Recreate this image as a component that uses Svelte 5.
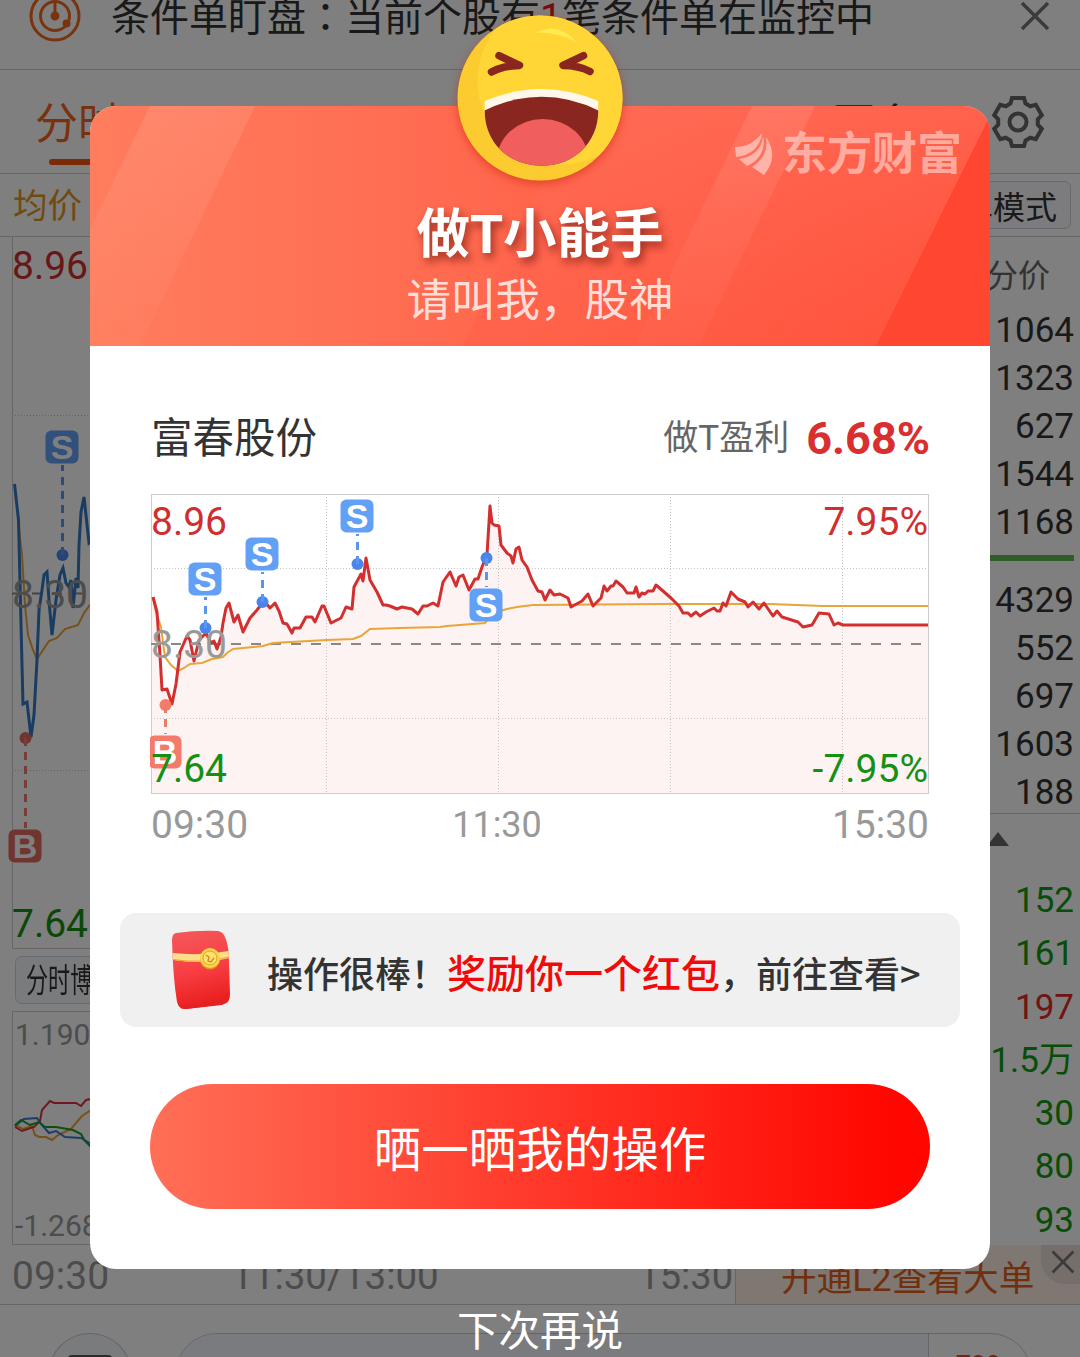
<script>
    const tabs = ['分时', '五日', '日K', '周K', '月K', '更多'];
    const asks = ['1064', '1323', '627', '1544', '1168'];
    const bids = ['4329', '552', '697', '1603', '188'];
    const trades = [
        { value: '152', down: true },
        { value: '161', down: true },
        { value: '197', down: false },
        { value: '1.5万', down: true },
        { value: '30', down: true },
        { value: '80', down: true },
        { value: '93', down: true }
    ];

    const price = '2,103 6,118 9,161 11,196 16,195 21,210 25,190 29,158 36,142 39,146 43,167 48,146 55,139 60,149 63,147 66,155 70,143 72,129 75,114 78,109 83,128 87,121 92,138 99,124 106,116 113,107 119,114 124,109 128,117 132,129 136,130 141,139 143,134 149,134 155,123 161,123 164,128 171,112 173,112 180,129 190,124 195,113 201,115 203,93 210,80 212,87 215,64 219,86 226,98 232,111 235,111 239,112 246,115 251,113 261,115 267,120 272,112 276,112 282,109 287,112 292,88 299,78 305,92 308,83 312,81 318,96 324,85 327,85 331,73 336,61 339,12 341,29 343,31 348,32 350,51 356,59 360,62 362,69 365,55 368,53 371,66 376,73 381,86 387,97 391,98 394,106 399,96 403,101 409,100 417,104 420,113 431,107 437,100 442,112 450,104 453,92 456,97 460,92 462,92 465,87 472,93 476,99 483,99 485,93 488,103 491,99 494,100 497,97 502,97 505,91 512,97 520,104 528,112 532,119 537,119 540,122 545,118 549,122 555,118 563,114 566,117 569,117 572,109 575,112 580,98 587,105 594,108 597,113 602,108 608,115 613,109 622,122 626,117 631,123 647,128 652,133 661,131 668,119 678,120 683,131 687,129 692,131 777,131';
    const average = '2,103 5,118 10,133 14,163 20,171 27,177 33,174 39,170 51,169 61,165 72,163 76,159 82,155 112,152 122,149 176,146 202,145 210,142 219,135 249,134 289,133 296,132 334,129 339,123 346,118 356,115 366,113 382,111 509,110 619,110 672,112 777,112';

    const points = [
        { label: 'S', x: 54, y: 85, dot: 134 },
        { label: 'S', x: 111, y: 60, dot: 108 },
        { label: 'S', x: 206, y: 22, dot: 70 },
        { label: 'S', x: 335, y: 111, dot: 64 },
        { label: 'B', x: 14, y: 258, dot: 211 }
    ];
    const backPoints = [
        { label: 'S', x: 62, y: 210, dot: 318 },
        { label: 'B', x: 25, y: 609, dot: 501 }
    ];

    // six teeth, each one the same outline turned by 60 degrees
    const tooth = [[-7.5, -18.5], [-6, -24], [6, -24], [7.5, -18.5]];
    const gear = [0, 60, 120, 180, 240, 300]
        .flatMap((deg) => {
            const a = (deg * Math.PI) / 180;
            return tooth.map(([x, y]) => `${x * Math.cos(a) - y * Math.sin(a)},${x * Math.sin(a) + y * Math.cos(a)}`);
        })
        .join(' ');
</script>

{#snippet marker(p)}
    <g class={p.label === 'S' ? 'sell' : 'buy'}>
        <circle cx={p.x + 0.5} cy={p.dot} r="6" />
        <line x1={p.x + 0.5} x2={p.x + 0.5} y1={p.dot} y2={p.y > p.dot ? p.y - 18 : p.y + 18} />
        <rect x={p.x - 16.5} y={p.y - 16.5} width="33" height="33" rx="6" />
        <text x={p.x} y={p.y + 12}>{p.label}</text>
    </g>
{/snippet}

<div class="screen">
    <div class="page">
        <div class="notice">
            <svg class="radar" width="52" height="52" viewBox="-26 -26 52 52">
                <circle r="24" />
                <circle r="14.5" />
                <line x1="0" y1="-24" x2="0" y2="0" />
                <circle class="solid" r="3" />
                <circle class="solid" cx="11.5" cy="7.5" r="2.5" />
            </svg>
            <p>条件单盯盘<i>：</i>当前个股有<b>1</b>笔条件单在监控中</p>
            <svg class="cross" width="30" height="30" viewBox="0 0 30 30"><path d="M2 2L28 28M28 2L2 28" /></svg>
        </div>

        <div class="tabs">
            {#each tabs as tab, i}
                <span class:active={i === 0}>{tab}</span>
            {/each}
            <svg class="gear" width="54" height="54" viewBox="-27 -27 54 54">
                <polygon points={gear} />
                <circle r="8.5" />
            </svg>
        </div>

        <div class="tools">
            <span class="avg">均价</span>
            <span class="mode">简单模式</span>
        </div>

        <div class="main">
            <div class="left">
                <svg class="back-chart" width="735" height="712" viewBox="0 0 735 712">
                    <path class="frame" d="M12.5 0V711.5H735" />
                    <path class="grid" d="M15 178.5H735M15 533.5H735" />
                    <path class="zero" d="M12 356.5H735" />
                    <polyline class="avg-line" points="18,283 22,318 25,368 28,398 33,413 37,422 43,413 49,404 57,401 65,392 78,388 84,376 90,368 100,366" />
                    <polyline class="back-line" points="14.5,247 18.5,283 22,428 23,467 27,465 31,500 34,478 37,423 39,373 42,353 44,338 47,335 49,363 52,398 56,363 60,338 63,331 66,346 69,350 71,343 73,371 76,341 78,351 79,308 81,275 84,260 89,306 93,303" />
                    {#each backPoints as p}
                        {@render marker(p)}
                    {/each}
                    <text class="num up" x="12" y="42">8.96</text>
                    <text class="num mid" x="12" y="371">8.30</text>
                    <text class="num down" x="12" y="700">7.64</text>
                </svg>
                <span class="chip"><span>分时博弈</span></span>
                <div class="flow">
                    <span>1.190</span>
                    <svg width="720" height="60" viewBox="0 0 720 60">
                        <polyline stroke="#f0a030" points="1,34 9,38 18,35 21,44 25,46 32,46 38,49 44,44 57,38 62,32 68,25 77,19 90,12" />
                        <polyline stroke="#e03040" points="1,36 8,40 20,36 26,30 28,19 36,10 40,12 62,12 67,15 72,9 77,8 90,10" />
                        <polyline stroke="#3a78d8" points="1,35 10,28 23,27 27,33 35,42 42,40 51,46 67,47 77,53 90,58" />
                        <polyline stroke="#18a028" points="1,34 7,29 16,34 25,31 31,36 42,36 59,39 67,43 71,50 77,56 90,58" />
                    </svg>
                    <span>-1.268</span>
                </div>
                <div class="times">
                    <span>09:30</span><span>11:30/13:00</span><span>15:30</span>
                </div>
            </div>
            <div class="right">
                <div class="price-tab">分价</div>
                {#each asks as n}<div class="row">{n}</div>{/each}
                <div class="bar"></div>
                {#each bids as n}<div class="row">{n}</div>{/each}
                <div class="sort"><svg width="22" height="14" viewBox="0 0 22 14"><path d="M11 0L22 14H0Z" /></svg></div>
                {#each trades as t}
                    <div class="row trade" class:fall={t.down}>{t.value}</div>
                {/each}
                <div class="promo">
                    <span>开通L2查看大单</span>
                    <div class="promo-close">
                        <svg class="cross" width="24" height="24" viewBox="0 0 30 30"><path d="M2 2L28 28M28 2L2 28" /></svg>
                    </div>
                </div>
            </div>
        </div>

        <div class="footer">
            <div class="round"><i></i></div>
            <div class="pill"><div class="input"></div><b>788</b></div>
        </div>
    </div>

    <div class="mask">
        <div class="dialog">
            <div class="head">
                <svg class="head-bg" width="900" height="240" viewBox="0 0 900 240">
                    <defs>
                        <linearGradient id="base"><stop offset="0" stop-color="#ff7d5e" /><stop offset=".5" stop-color="#ff664c" /><stop offset="1" stop-color="#ff4832" /></linearGradient>
                        <linearGradient id="panel" x2="0" y2="1"><stop offset="0" stop-color="#ff705c" stop-opacity=".65" /><stop offset="1" stop-color="#ff5c46" stop-opacity=".4" /></linearGradient>
                        <linearGradient id="fade" x2="0" y2="1"><stop offset="0" stop-color="#fff" stop-opacity=".1" /><stop offset="1" stop-color="#fff" stop-opacity=".02" /></linearGradient>
                    </defs>
                    <rect width="900" height="240" fill="url(#base)" />
                    <path d="M60 0H165L50 240H0V124Z" fill="url(#fade)" />
                    <path d="M488 0H900V10L786 240H372Z" fill="url(#panel)" />
                    <path d="M662 0H725L608 240H545Z" fill="url(#fade)" />
                    <path d="M900 10V240H786Z" fill="#ff4630" />
                </svg>
                <div class="brand">
                    <svg width="40" height="42" viewBox="0 0 40 42">
                        <path d="M26 0C19 9 11 13 0 13L1 23C14 22 25 14 27 0Z" />
                        <path d="M28 2C27 15 18 23 4 25L12 32C24 27 31 16 28 2Z" />
                        <path d="M31 3C33 17 28 26 17 33L29 41C39 29 40 16 31 3Z" />
                    </svg>
                    <span>东方财富</span>
                </div>
                <h1>做T小能手</h1>
                <h2>请叫我，股神</h2>
                <svg class="emoji" width="166" height="166" viewBox="0 0 166 166">
                    <defs>
                        <clipPath id="face"><circle cx="83" cy="83" r="82.5" /></clipPath>
                        <clipPath id="mouth"><path d="M27.7 86Q84.5 62 141.3 86V96C141 128 117 150.7 84.5 150.7C52 150.7 27.7 128 27.7 96Z" /></clipPath>
                    </defs>
                    <circle cx="83" cy="83" r="82.5" fill="#fccb30" />
                    <circle cx="104" cy="66" r="83.5" fill="#ffd636" clip-path="url(#face)" />
                    <path d="M79 17.5Q102 7 119 26.7Q100 17 79 17.5Z" fill="#ffec50" />
                    <g class="eyes">
                        <path d="M42 40.7L62.5 50.5Q46 50.5 34.5 57" />
                        <path d="M126.5 40.7L106 50.5Q122 50.5 133 56.5" />
                    </g>
                    <g clip-path="url(#mouth)">
                        <rect x="20" y="60" width="130" height="100" fill="#fff7ea" />
                        <path d="M27 95.7Q84.5 68 142 95.7V160H27Z" fill="#89261f" />
                        <ellipse cx="85.7" cy="146" rx="46" ry="42" fill="#f15e5e" />
                    </g>
                </svg>
            </div>

            <div class="body">
                <div class="summary">
                    <span class="stock">富春股份</span>
                    <span class="gain">做T盈利<b>6.68%</b></span>
                </div>
                <svg class="chart" width="780" height="300" viewBox="0 0 780 300">
                    <polygon class="area" points="{price} 777,300 0,300 0,103" transform="translate(1 0)" />
                    <rect class="frame" x="1.5" y=".5" width="777" height="299" />
                    <path class="grid" d="M4 74.5H778M4 224.5H778M176.5 3V300M348.5 3V300M520.5 3V300M692.5 3V300" />
                    <path class="zero" d="M1 150H778" />
                    <g transform="translate(1 0)">
                        <polyline class="avg-line" points={average} />
                        <polyline class="price-line" points={price} />
                        {#each points as p}
                            {@render marker(p)}
                        {/each}
                    </g>
                    <text class="num up" x="1" y="41">8.96</text>
                    <text class="num mid" x="1" y="164">8.30</text>
                    <text class="num down" x="1" y="288">7.64</text>
                    <text class="num up end" x="778" y="41">7.95%</text>
                    <text class="num down end" x="778" y="288">-7.95%</text>
                </svg>
                <div class="axis"><span>09:30</span><span class="noon">11:30</span><span>15:30</span></div>

                <div class="reward">
                    <svg width="66" height="84" viewBox="0 0 66 84">
                        <defs>
                            <linearGradient id="paper" x2=".2" y2="1"><stop offset="0" stop-color="#f4595c" /><stop offset=".55" stop-color="#f83f43" /><stop offset="1" stop-color="#ea2020" /></linearGradient>
                        </defs>
                        <path d="M8 5Q30 2 50 3Q55 4 57 9Q61 18 61 34L62 66Q62 75 56 76L18 81Q11 82 9 74Q5 50 4 12Q4 6 8 5Z" fill="url(#paper)" />
                        <path d="M13 77Q38 78 59 71Q57 76 54 77L18 81Q14 81 13 77Z" fill="#e02424" />
                        <path d="M4.5 25Q34 28 60.5 23L61 30Q34 37 5 32Z" fill="#ffe08a" />
                        <path d="M5 31.5Q34 36 61 29" fill="none" stroke="#f0a030" />
                        <circle cx="42" cy="31.5" r="10" fill="#d99a1a" />
                        <circle cx="42" cy="30" r="10" fill="#ffd54f" />
                        <circle cx="42" cy="30" r="7" fill="#ffdf6e" stroke="#d9a520" />
                        <path d="M38 27L41 29L40 33L43 34L46 30" fill="none" stroke="#c98e12" stroke-width="1.3" />
                    </svg>
                    <p>操作很棒！<em>奖励你一个红包</em>，前往查看&gt;</p>
                </div>
                <button>晒一晒我的操作</button>
            </div>
        </div>
        <span class="later">下次再说</span>
    </div>
</div>

<style>
    :global(body) {
        margin: 0;
        font-family: Roboto, "Noto Sans CJK SC", sans-serif;
    }

    svg {
        display: block;
        flex: none;
    }

    p, h1, h2 {
        margin: 0;
    }

    .screen {
        position: relative;
        width: 1080px;
        height: 1357px;
        overflow: hidden;
        background: #fff;
        color: #333;
        white-space: nowrap;
    }

    .page {
        height: 100%;
        display: flex;
        flex-direction: column;
    }

    /* notice */
    .notice {
        flex: none;
        height: 70px;
        padding: 0 30px 37px 29px;
        border-bottom: 1px solid #ccc;
        display: flex;
        align-items: center;
        box-sizing: border-box;
    }

    .notice p {
        flex: 1;
        margin-left: 30px;
        font-size: 39px;
        line-height: 40px;
    }

    .notice b {
        font-weight: 400;
        color: #f01818;
    }

    /* the traditional font centres the colon in its box */
    .notice i {
        font-style: normal;
        font-family: "Noto Sans CJK TC", sans-serif;
    }

    .radar {
        fill: none;
        stroke: #f0681e;
        stroke-width: 3;
    }

    .solid {
        fill: #f0681e;
    }

    .cross {
        fill: none;
        stroke: #777;
        stroke-width: 3.5;
    }

    /* tabs */
    .tabs {
        flex: none;
        height: 104px;
        box-sizing: border-box;
        border-bottom: 1px solid #ccc;
        padding: 0 35px;
        display: grid;
        grid-template-columns: 160px 170px 160px 160px 148px 1fr 54px;
        align-items: center;
        font-size: 42px;
    }

    .tabs span {
        line-height: 99px;
        height: 94px;
    }

    .tabs .active {
        justify-self: start;
        font-size: 43px;
        color: #f2641e;
    }

    .active::after {
        content: '';
        display: block;
        width: 58px;
        height: 6px;
        margin: -15px auto 0;
        border-radius: 3px;
        background: #f2560a;
    }

    .gear {
        fill: none;
        stroke: #666;
        stroke-width: 4;
    }

    .tools {
        flex: none;
        height: 63px;
        box-sizing: border-box;
        border-bottom: 1px solid #ccc;
        padding: 0 9px 0 13px;
        display: flex;
        align-items: center;
        justify-content: space-between;
    }

    .avg {
        margin-top: -4px;
        font-size: 34.5px;
        color: #e0961e;
    }

    .mode {
        height: 46px;
        padding: 0 13px;
        border: 1px solid #ccd0da;
        border-radius: 6px;
        background: #f8f9fc;
        font-size: 32px;
        line-height: 52px;
    }

    /* quote area */
    .main {
        flex: none;
        height: 1067px;
        display: grid;
        grid-template-columns: 735px 345px;
        border-bottom: 1px solid #ccc;
    }

    .chip {
        display: block;
        width: 110px;
        height: 46px;
        margin: 7px 0 7px 15px;
        padding-left: 10px;
        border: 1px solid #ccd4e2;
        border-radius: 7px;
        background: #f5f6fa;
        font-size: 33px;
        line-height: 48px;
    }

    .chip span {
        display: inline-block;
        transform: scaleX(0.67);
        transform-origin: left;
    }

    .flow {
        height: 228px;
        margin-left: 12px;
        padding: 4px 2px 0;
        border: 1px solid #ccc;
        border-right: 0;
        display: flex;
        flex-direction: column;
        justify-content: space-between;
        color: #999;
        font-size: 30px;
        line-height: 37px;
    }

    .flow svg {
        margin: 0 0 19px -1px;
        fill: none;
        stroke-width: 2;
    }

    .times {
        display: flex;
        padding: 0 2px 0 12px;
        line-height: 62px;
        font-size: 39px;
        color: #999;
    }

    .times span:nth-child(2) {
        margin: 0 auto 0 122px;
        font-size: 38.5px;
    }

    .times span:last-child {
        font-size: 38px;
    }

    .right {
        display: flex;
        flex-direction: column;
        text-align: right;
        font-size: 35px;
    }

    .price-tab {
        height: 69px;
        line-height: 78px;
        padding-right: 30px;
        font-size: 32px;
        color: #666;
    }

    .row {
        height: 48px;
        line-height: 50px;
        padding-right: 6px;
    }

    .bar {
        height: 6px;
        margin: 9px 6px 15px 0;
        background: #62b850;
    }

    .sort {
        height: 40px;
        margin-top: -3px;
        padding: 18px 0 0 252px;
        border-top: 1px solid #ccc;
    }

    .sort path {
        fill: #666;
    }

    .trade {
        height: 53.3px;
        line-height: 57px;
        color: #e02828;
    }

    .fall {
        color: #109a10;
    }

    .promo {
        height: 59px;
        display: flex;
        justify-content: space-between;
        border-left: 1px solid #ccc;
        background: #fff0e4;
        color: #e0601c;
        font-size: 35.7px;
        line-height: 68px;
        padding-left: 45px;
    }

    .promo span {
        height: 59px;
    }

    .promo-close {
        box-sizing: border-box;
        width: 39px;
        height: 39px;
        padding: 0 0 5px 5px;
        border-radius: 0 0 0 24px;
        background: #ebddd4;
        display: grid;
        place-items: center;
    }

    .footer {
        display: flex;
        padding: 28px 48px 0;
        gap: 43px;
    }

    .round {
        width: 82px;
        height: 82px;
        border: 1px solid #c4c9d6;
        border-radius: 50%;
        background: #f5f6f9;
    }

    .round i {
        display: block;
        width: 46px;
        height: 30px;
        margin: 21px auto 0;
        border-radius: 5px;
        background: #555;
    }

    .pill {
        width: 856px;
        height: 82px;
        border: 1px solid #c4c9d6;
        border-radius: 42px;
        display: flex;
        overflow: hidden;
    }

    .input {
        width: 752px;
        border-right: 1px solid #c4c9d6;
        background: #f4f7fc;
    }

    .pill b {
        padding: 16px 0 0 27px;
        font-size: 26px;
        color: #e0501c;
    }

    /* dialog over the page */
    .mask {
        position: absolute;
        inset: 0;
        background: rgba(0, 0, 0, 0.5);
        display: flex;
        flex-direction: column;
        align-items: center;
        padding-top: 106px;
    }

    .dialog {
        flex: none;
        width: 900px;
        height: 1163px;
        border-radius: 26px;
        background: #fff;
    }

    .head {
        position: relative;
        height: 240px;
        color: #fff;
        text-align: center;
    }

    .head-bg {
        position: absolute;
        border-radius: 26px 26px 0 0;
    }

    .brand {
        position: absolute;
        top: 26px;
        right: 28px;
        display: flex;
        align-items: center;
        gap: 7px;
        fill: currentColor;
        color: rgba(255, 255, 255, 0.48);
        font-size: 45px;
        font-weight: 700;
        line-height: 46px;
    }

    .emoji {
        position: absolute;
        top: -91px;
        left: 367px;
        filter: drop-shadow(0 3px 5px rgba(200, 30, 0, 0.5));
    }

    .eyes {
        fill: none;
        stroke: #89261f;
        stroke-width: 7.5;
        stroke-linecap: round;
        stroke-linejoin: round;
    }

    h1 {
        position: relative;
        padding-top: 94px;
        font-size: 53.5px;
        font-weight: 700;
        line-height: 70px;
        text-shadow: 3px 5px 8px rgba(90, 10, 0, 0.6);
    }

    h2 {
        position: relative;
        font-size: 44.5px;
        font-weight: 400;
        line-height: 62px;
        color: rgba(255, 255, 255, 0.8);
    }

    .body {
        padding: 0 60px;
    }

    .summary {
        height: 148px;
        padding: 37px 0 0 1px;
        box-sizing: border-box;
        display: flex;
        justify-content: space-between;
        align-items: center;
        line-height: 60px;
    }

    .stock {
        font-size: 41.5px;
    }

    .gain {
        display: flex;
        font-size: 35px;
        color: #666;
    }

    .gain b {
        margin-left: 17px;
        font-size: 45px;
        color: #d92f2f;
    }

    .frame {
        fill: none;
        stroke: #ccc;
    }

    .area {
        fill: #fdf3f2;
    }

    .grid {
        fill: none;
        stroke: #c4c4c4;
        stroke-dasharray: 1 2;
    }

    .zero {
        fill: none;
        stroke: #888;
        stroke-width: 1.8;
        stroke-dasharray: 10 10;
    }

    .avg-line {
        fill: none;
        stroke: #e8a53a;
        stroke-width: 2;
    }

    .price-line {
        fill: none;
        stroke: #d32f2f;
        stroke-width: 3;
        stroke-linejoin: round;
    }

    .back-line {
        fill: none;
        stroke: #3478c0;
        stroke-width: 3;
    }

    .sell circle {
        fill: #4a86ea;
    }

    .sell line {
        stroke: #5a96ee;
    }

    .sell rect {
        fill: #62a0f6;
    }

    .buy circle, .buy rect {
        fill: #f47a6a;
    }

    .buy line {
        stroke: #ee7a6c;
    }

    .back-chart .buy rect, .back-chart .buy circle {
        fill: #e06a5c;
    }

    g line {
        stroke-width: 3;
        stroke-dasharray: 8 6;
    }

    g text {
        fill: #fff;
        font-family: "Liberation Sans", sans-serif;
        font-size: 34px;
        font-weight: 700;
        text-anchor: middle;
    }

    .num {
        font-size: 39px;
    }

    .end {
        text-anchor: end;
    }

    .up {
        fill: #cf2f2f;
    }

    .mid {
        fill: #999;
    }

    .down {
        fill: #149014;
    }

    .axis {
        display: grid;
        grid-template-columns: 1fr auto 1fr;
        padding: 0 1px;
        font-size: 39px;
        line-height: 62px;
        color: #999;
    }

    .axis span:last-child {
        text-align: right;
    }

    /* noon sits on the second grid line, left of the middle */
    .axis .noon {
        margin: 0 43px 0 -43px;
        font-size: 36px;
    }

    .reward {
        height: 114px;
        margin: 57px -30px;
        padding-left: 48px;
        border-radius: 16px;
        background: #f0f0f0;
        display: flex;
        align-items: center;
        gap: 33px;
        font-family: "Noto Sans CJK SC", sans-serif;
        font-size: 36px;
        font-weight: 500;
    }

    .reward p {
        line-height: 60px;
        padding-top: 2px;
    }

    em {
        font-style: normal;
        font-size: 39px;
        color: #f00a0a;
    }

    button {
        width: 780px;
        height: 125px;
        padding: 0;
        border: 0;
        border-radius: 63px;
        background: linear-gradient(90deg, #ff6f57, #ff0600 96%);
        color: #fff;
        font: 47.5px/125px "Noto Sans CJK SC", sans-serif;
    }

    .later {
        margin-top: 33px;
        font-size: 41.5px;
        line-height: 60px;
        color: #fff;
    }
</style>
